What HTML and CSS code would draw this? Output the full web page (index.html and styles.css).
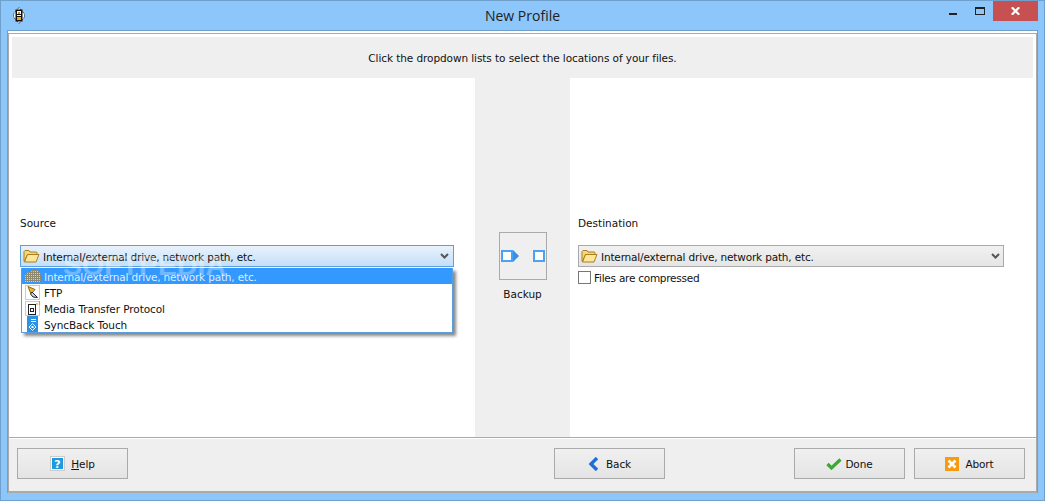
FILE: index.html
```html
<!DOCTYPE html>
<html lang="en">
<head>
<meta charset="utf-8">
<title>New Profile</title>
<link rel="stylesheet" href="styles.css">
</head>
<body>
<div class="window">
  <header class="titlebar">
    <svg class="app-icon" width="12" height="17" viewBox="0 0 12 17">
      <path d="M6 .5 L11.5 7 V10 L6 16.5 L.5 10 V7Z" fill="#fff" stroke="#111" stroke-dasharray="1 1"/>
      <rect x="2.5" y="2.5" width="7" height="12" fill="#111"/>
      <rect x="4" y="4" width="4" height="3" fill="#fff"/>
      <rect x="5" y="5" width="2" height="2" fill="#e8890c"/>
      <rect x="4" y="8" width="4" height="1" fill="#fff"/>
      <rect x="4" y="10" width="4" height="3" fill="#f5a623"/>
    </svg>
    <h1 class="title">New Profile</h1>
    <div class="controls">
      <span class="ctl ctl-min"><i class="min-bar"></i></span>
      <span class="ctl ctl-max"><i class="max-box"></i></span>
      <span class="ctl ctl-close">
        <svg width="9" height="8" viewBox="0 0 9 8"><path d="M.8 .3 L8.2 7.7 M8.2 .3 L.8 7.7" stroke="#fff" stroke-width="2.2" fill="none"/></svg>
      </span>
    </div>
  </header>

  <main class="client">
    <div class="content">
      <div class="hint">Click the dropdown lists to select the locations of your files.</div>
      <div class="columns">
        <section class="col col-source">
          <label class="field-label">Source</label>
          <div class="combo combo-open">
            <svg class="folder" width="17" height="14" viewBox="0 0 17 14"><path d="M1 12.5V2.5L2 1.5H6L7 3H13.5L14 4V5.5H4.5L1.5 12.5Z" fill="#f4d77c" stroke="#a97f1e"/><path d="M1.5 13H13L16 5.5H4.5Z" fill="#fbe69a" stroke="#a97f1e"/></svg>
            <span class="combo-text">Internal/external drive, network path, etc.</span>
            <svg class="chev" width="9" height="6" viewBox="0 0 9 6"><path d="M1 1 L4.5 4.5 L8 1" stroke="#555" stroke-width="2" fill="none"/></svg>
          </div>
          <ul class="droplist">
            <li class="row row-sel">
              <svg class="row-icon" width="16" height="14" viewBox="0 0 16 14"><defs><pattern id="dots" width="2" height="2" patternUnits="userSpaceOnUse"><rect width="1" height="1" fill="#e9d48a"/><rect x="1" y="1" width="1" height="1" fill="#8f8a70"/></pattern></defs><path d="M0 13V6L3 3H6L7 1H13L16 6V13Z" fill="url(#dots)"/></svg>
              <span>Internal/external drive, network path, etc.</span>
            </li>
            <li class="row">
              <svg class="row-icon" width="16" height="15" viewBox="0 0 16 15"><rect x=".5" y=".5" width="14" height="14" fill="#fff" stroke="#ccc"/><path d="M3 1.5 L10 4.5 L6 9Z" fill="#f2b632" stroke="#8a6a10"/><path d="M7 7 L12.5 12.5 L8 12 L5.5 9Z" fill="#c5d4ee" stroke="#223"/></svg>
              <span>FTP</span>
            </li>
            <li class="row">
              <svg class="row-icon" width="16" height="15" viewBox="0 0 16 15"><rect x=".5" y=".5" width="14" height="14" fill="#fff" stroke="#ccc"/><rect x="3.5" y="3.5" width="7" height="10" fill="#fff" stroke="#222"/><rect x="5.5" y="7.5" width="3" height="3" fill="#fff" stroke="#222"/><path d="M12 4V2 M14.5 4V0" stroke="#e0a020" stroke-width="1.2"/></svg>
              <span>Media Transfer Protocol</span>
            </li>
            <li class="row">
              <svg class="row-icon" width="16" height="16" viewBox="0 0 16 16"><rect x="2" y="0" width="11" height="16" fill="#2a94e4"/><path d="M6 3.5H11 M6 5.5H11" stroke="#fff"/><path d="M7.5 7.5 L11 11 L7.5 14.5 L4 11Z" fill="none" stroke="#fff"/><rect x="6.5" y="10" width="2" height="2" fill="#fff"/></svg>
              <span>SyncBack Touch</span>
            </li>
          </ul>
          <div class="watermark">SOFTPEDIA</div>
        </section>

        <section class="col-mid">
          <div class="mode-btn">
            <svg width="44" height="12" viewBox="0 0 44 12">
              <rect x="1" y="1" width="10" height="10" fill="#fff" stroke="#4aa3f0" stroke-width="2"/>
              <path d="M12 0 L18 6 L12 12Z" fill="#3d8fe6"/>
              <rect x="33" y="1" width="10" height="10" fill="#fff" stroke="#4aa3f0" stroke-width="2"/>
            </svg>
          </div>
          <div class="mode-label">Backup</div>
        </section>

        <section class="col col-dest">
          <label class="field-label">Destination</label>
          <div class="combo combo-grey">
            <svg class="folder" width="17" height="14" viewBox="0 0 17 14"><path d="M1 12.5V2.5L2 1.5H6L7 3H13.5L14 4V5.5H4.5L1.5 12.5Z" fill="#f4d77c" stroke="#a97f1e"/><path d="M1.5 13H13L16 5.5H4.5Z" fill="#fbe69a" stroke="#a97f1e"/></svg>
            <span class="combo-text">Internal/external drive, network path, etc.</span>
            <svg class="chev" width="9" height="6" viewBox="0 0 9 6"><path d="M1 1 L4.5 4.5 L8 1" stroke="#555" stroke-width="2" fill="none"/></svg>
          </div>
          <div class="check-row"><span class="checkbox"></span><span class="check-text">Files are compressed</span></div>
        </section>
      </div>
    </div>

    <footer class="footer">
      <div class="btn btn-help">
        <svg width="15" height="15" viewBox="0 0 15 15"><rect x=".5" y=".5" width="14" height="14" fill="#fff" stroke="#ccc"/><rect x="2" y="2" width="11" height="11" fill="#1e9be0"/><text x="7.5" y="11.5" class="q-mark">?</text></svg>
        <span><u>H</u>elp</span>
      </div>
      <div class="btn btn-back">
        <svg width="11" height="14" viewBox="0 0 11 14"><path d="M9 1 L3 7 L9 13" fill="none" stroke="#1f6fd6" stroke-width="3.4"/></svg>
        <span>Back</span>
      </div>
      <div class="btn btn-done">
        <svg width="16" height="12" viewBox="0 0 16 12"><path d="M1.5 6 L5.5 10 L14.5 1.5" fill="none" stroke="#3aa935" stroke-width="3.2"/></svg>
        <span>Done</span>
      </div>
      <div class="btn btn-abort">
        <svg width="14" height="14" viewBox="0 0 14 14"><rect width="14" height="14" fill="#f79a10"/><path d="M3.5 3.5 L10.5 10.5 M10.5 3.5 L3.5 10.5" stroke="#fff" stroke-width="2.6"/></svg>
        <span>Abort</span>
      </div>
    </footer>
  </main>
</div>
</body>
</html>
```
FILE: styles.css
```css
* { box-sizing: border-box; }
html, body { margin: 0; padding: 0; }
body {
  width: 1045px;
  height: 501px;
  overflow: hidden;
  font-family: "DejaVu Sans", sans-serif;
  font-size: 10.5px;
  color: #111;
}
.window {
  width: 1045px;
  height: 501px;
  display: flex;
  flex-direction: column;
  background: #8cc6fb;
  border: 1px solid #6f9fcb;
}
.titlebar {
  height: 29px;
  flex: none;
  display: flex;
  align-items: flex-start;
  position: relative;
}
.app-icon { margin: 6px 0 0 12px; }
.title {
  position: absolute;
  left: 0;
  right: 0;
  top: 5px;
  margin: 0;
  text-align: center;
  font: 400 14px/20px "Open Sans", sans-serif;
  color: #222;
}
.controls {
  margin-left: auto;
  margin-right: 6px;
  display: flex;
  position: relative;
}
.ctl { display: flex; height: 20px; align-items: center; justify-content: center; }
.ctl-min { width: 29px; padding-left: 3px; }
.ctl-max { width: 27px; }
.ctl-close { width: 45px; background: #c75050; }
.min-bar { width: 8px; height: 2px; background: #222; margin-top: 6px; }
.max-box { width: 10px; height: 8px; border: 1px solid #222; border-top-width: 2px; }

.client {
  flex: 1;
  margin: 0 6px 7px 6px;
  display: flex;
  flex-direction: column;
  border: 1px solid #6f9fcb;
  border-bottom: 0;
  background: #fff;
}
.content {
  flex: 1;
  display: flex;
  flex-direction: column;
  padding: 3px 3px 0;
  margin-top: 2px;
  border-top: 1px solid #aaa;
  border-left: 1px solid #aaa;
  border-right: 1px solid #aaa;
  background: #fff;
  min-height: 0;
}
.hint {
  height: 41px;
  flex: none;
  background: #efefef;
  display: flex;
  align-items: center;
  justify-content: center;
  letter-spacing: -.08px;
}
.columns { flex: 1; display: flex; min-height: 0; }
.col { position: relative; padding-top: 138px; }
.col-source { width: 463px; padding-left: 8px; padding-right: 21px; }
.col-dest { flex: 1; padding-left: 8px; padding-right: 29px; }
.col-mid {
  width: 95px;
  background: #efefef;
  display: flex;
  flex-direction: column;
  align-items: center;
  padding-top: 154px;
}
.field-label { display: block; height: 14px; line-height: 14px; margin-bottom: 15px; }
.combo {
  height: 22px;
  display: flex;
  align-items: center;
  padding: 0 3px 0 2px;
  border: 1px solid #aaa;
}
.combo-open { border-color: #5b9fdc; background: linear-gradient(#e9f2fb, #c3dff9); padding-right: 4px; }
.combo-grey { background: linear-gradient(#f1f1f1, #e5e5e5); }
.folder { flex: none; margin-right: 3px; }
.combo-text { flex: 1; padding-top: 2px; letter-spacing: -.17px; }
.chev { flex: none; }
.droplist {
  position: absolute;
  left: 9px;
  top: 190px;
  width: 432px;
  margin: 0;
  padding: 0;
  list-style: none;
  background: #fff;
  border: 1px solid #5b9fdc;
  border-top: 0;
  box-shadow: 3px 3px 3px #888;
}
.row { height: 16px; display: flex; align-items: center; padding-left: 3px; letter-spacing: -.08px; }
.row span { padding-top: 2px; }
.row-icon { flex: none; margin-right: 3px; }
.row-sel { background: #3399ff; color: #dceeff; letter-spacing: -.17px; }
.watermark {
  position: absolute;
  left: 51px;
  top: 172px;
  font: 700 28.5px/30px "Liberation Sans", sans-serif;
  color: #fff;
  opacity: .3;
  pointer-events: none;
}
.mode-btn {
  width: 48px;
  height: 48px;
  border: 1px solid #aaa;
  display: flex;
  align-items: center;
  justify-content: center;
}
.mode-label { margin-top: 8px; }
.check-row { display: flex; align-items: center; gap: 3px; margin-top: 4px; height: 13px; }
.check-text { letter-spacing: -.25px; }
.checkbox { width: 13px; height: 13px; border: 1px solid #777; background: #fff; }

.footer {
  height: 56px;
  flex: none;
  display: flex;
  align-items: flex-start;
  padding: 10px 11px 0 8px;
  background: #efefef;
  border: 1px solid #aaa;
  border-bottom-width: 2px;
  box-shadow: inset 0 1px 0 #fff;
}
.btn {
  width: 111px;
  height: 31px;
  display: flex;
  align-items: center;
  justify-content: center;
  gap: 6px;
  border: 1px solid #aaa;
  background: linear-gradient(#f0f0f0, #e4e4e4);
  letter-spacing: -.1px;
}
.btn-back { margin-left: 426px; gap: 7px; }
.btn-done { margin-left: auto; margin-right: 9px; gap: 3px; }
.q-mark { font: 700 11px "DejaVu Sans", sans-serif; fill: #fff; text-anchor: middle; }
```
